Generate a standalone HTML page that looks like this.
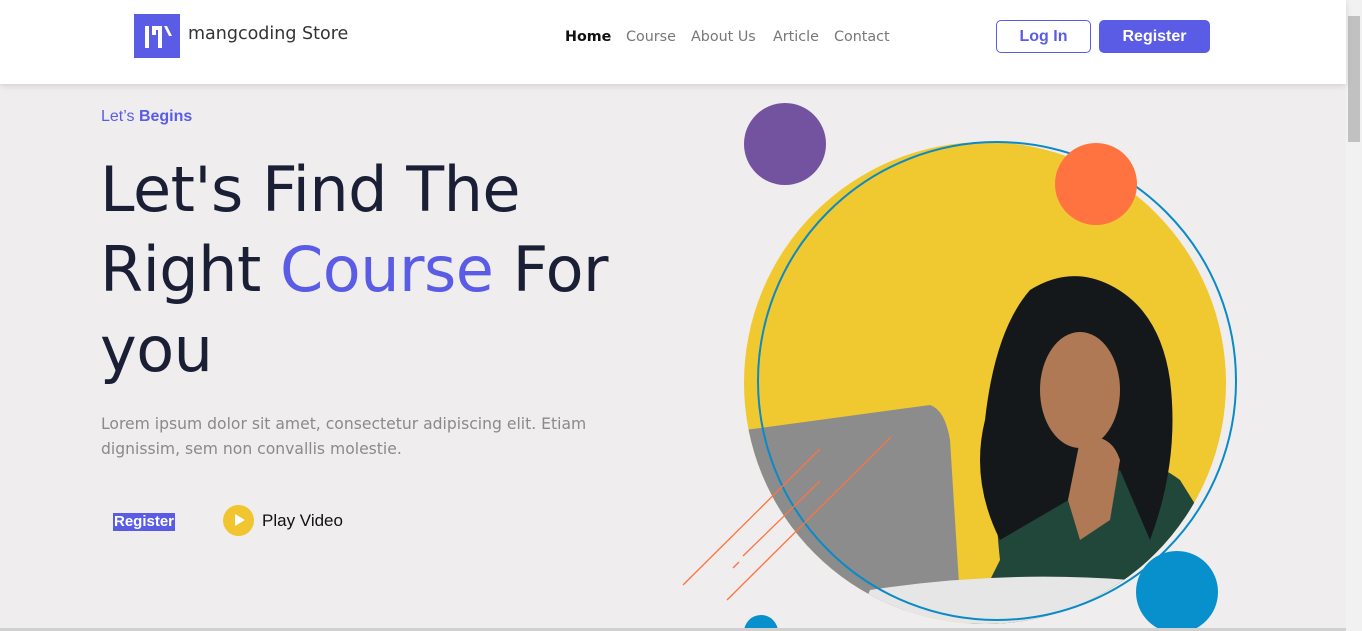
<!DOCTYPE html>
<html><head><style>
*{margin:0;padding:0;box-sizing:border-box}
body{width:1362px;height:631px;overflow:hidden;background:#efedee;font-family:"Liberation Sans",sans-serif;position:relative}
.nav{position:absolute;left:0;top:0;width:1346px;height:84px;background:#fff;box-shadow:0 2px 6px rgba(0,0,0,.12);z-index:5}
.logo{position:absolute;left:134px;top:14px;width:46px;height:44px;background:#5a5ce6}
.brand{position:absolute;left:188px;top:24px;color:#333;font-family:"DejaVu Sans",sans-serif;font-size:17.5px}
.menu{position:absolute;top:29px;color:#777;font-family:"DejaVu Sans",sans-serif;font-size:14.3px}
.btn1{position:absolute;left:996px;top:20px;width:95px;height:33px;border:1.5px solid #5a5ce6;border-radius:5px;color:#5a5ce6;font-size:16px;text-align:center;line-height:31px;background:#fff;font-weight:bold}
.btn2{position:absolute;left:1099px;top:20px;width:111px;height:33px;border-radius:5px;background:#5a5ce6;color:#fff;font-size:16px;font-weight:bold;text-align:center;line-height:34px}
.scroll{position:absolute;right:0;top:0;width:16px;height:631px;background:#f1f1f1}
.thumb{position:absolute;right:2px;top:16px;width:12px;height:126px;background:#c1c1c1}
h1{position:absolute;left:100px;top:150px;font-weight:normal;font-size:62px;line-height:80px;color:#1a1f36;font-family:"DejaVu Sans",sans-serif;letter-spacing:-0.5px}
</style></head><body>
<div class="nav">
 <div class="logo"><svg width="46" height="44"><rect x="11" y="12" width="4" height="22" fill="#fff"/><rect x="18" y="12" width="4" height="9" fill="#fff"/><rect x="18" y="12" width="10" height="4" fill="#fff"/><rect x="24" y="12" width="4" height="22" fill="#fff"/><path d="M30 12 L33 12 L38 22 L35 22Z" fill="#fff"/></svg></div>
 <div class="brand">mangcoding Store</div>
 <div class="menu" style="left:565px;color:#111;font-weight:bold">Home</div>
 <div class="menu" style="left:626px">Course</div>
 <div class="menu" style="left:691px">About Us</div>
 <div class="menu" style="left:773px">Article</div>
 <div class="menu" style="left:834px">Contact</div>
 <div class="btn1">Log In</div>
 <div class="btn2">Register</div>
</div>
<div class="scroll"><div class="thumb"></div></div>
<div style="position:absolute;left:101px;top:108px;font-size:16px;color:#5a5ce6">Let’s <b>Begins</b></div>
<h1>Let's Find The<br>Right <span style="color:#5a5ce6;font-family:'DejaVu Sans'">Course</span> For<br>you</h1>
<div style="position:absolute;left:101px;top:412px;font-size:15.6px;line-height:25px;color:#8a8a8a;width:560px;font-family:'DejaVu Sans',sans-serif">Lorem ipsum dolor sit amet, consectetur adipiscing elit. Etiam dignissim, sem non convallis molestie.</div>
<div style="position:absolute;left:113px;top:513px;background:#5a5ce6;color:#fff;font-size:15px;font-weight:bold;padding:0 1px;line-height:18px">Register</div>
<div style="position:absolute;left:223px;top:505px;width:31px;height:31px;border-radius:50%;background:#f0c530"></div>
<div style="position:absolute;left:235px;top:514px;width:0;height:0;border-left:10px solid #fff;border-top:6px solid transparent;border-bottom:6px solid transparent"></div>
<div style="position:absolute;left:262px;top:511px;font-size:17px;color:#111">Play Video</div>
<svg style="position:absolute;left:0;top:0" width="1346" height="631">
<defs><clipPath id="c"><circle cx="985" cy="383" r="241"/></clipPath></defs>
<circle cx="985" cy="383" r="241" fill="#f0c830"/>
<g clip-path="url(#c)">
 <path d="M1000 560 Q990 470 1010 450 L1090 460 Q1140 450 1180 480 L1230 560 L1230 640 L960 640Z" fill="#21463a"/>
 <path d="M1030 290 Q1070 265 1110 285 Q1160 310 1170 380 Q1180 460 1150 540 L1120 470 L1000 540 Q970 480 985 420 Q995 330 1030 290Z" fill="#15181a"/>
 <ellipse cx="1080" cy="390" rx="40" ry="58" fill="#b07955"/>
 <path d="M1080 440 Q1110 430 1120 460 L1110 520 L1080 540 L1068 500Z" fill="#b07955"/>
 <path d="M745 430 L930 405 Q945 410 950 440 L960 600 L740 640Z" fill="#8c8c8c"/>
 <path d="M870 590 Q1000 570 1130 580 L1140 640 L850 640Z" fill="#e6e6e6"/>
</g>
<circle cx="997" cy="381" r="239" fill="none" stroke="#0a8ac6" stroke-width="2"/>
<circle cx="785" cy="144" r="41" fill="#7352a0"/>
<circle cx="1096" cy="184" r="41" fill="#ff7340"/>
<circle cx="1177" cy="592" r="41" fill="#0890cc"/>
<circle cx="761" cy="632" r="17" fill="#0890cc"/>
<g stroke="#ff7340" stroke-width="1.3"><line x1="683" y1="585" x2="820" y2="449"/><line x1="743" y1="556" x2="820" y2="481"/><line x1="727" y1="600" x2="891" y2="437"/><line x1="733" y1="568" x2="739" y2="562"/></g>
</svg>
<div style="position:absolute;left:0;top:628px;width:1346px;height:3px;background:#cfd0cf"></div>
</body></html>
